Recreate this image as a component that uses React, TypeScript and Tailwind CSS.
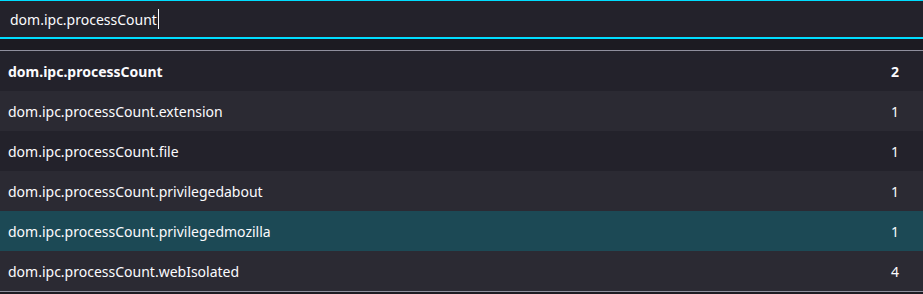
import React from 'react'

const rows = [
  { name: 'dom.ipc.processCount', value: '2', bold: true },
  { name: 'dom.ipc.processCount.extension', value: '1' },
  { name: 'dom.ipc.processCount.file', value: '1' },
  { name: 'dom.ipc.processCount.privilegedabout', value: '1' },
  { name: 'dom.ipc.processCount.privilegedmozilla', value: '1', selected: true },
  { name: 'dom.ipc.processCount.webIsolated', value: '4' },
]

const App = () => {
  return (
    <div
      className="h-[294px] w-[923px] bg-[#1c1b22] text-[#fbfbfe] text-[14px] overflow-hidden"
      style={{ fontFamily: '"Noto Sans", "Open Sans", sans-serif' }}
    >
      <div className="h-[39px] bg-[#23222b] border-t border-[#00ddff] border-b-2 flex items-center pl-[10px]">
        <span>dom.ipc.processCount</span>
        <span className="ml-[1px] inline-block w-px h-[20px] bg-[#fbfbfe]" />
      </div>

      <div className="mt-[11px] border-t border-b border-[#8f8f9d]">
        {rows.map((row, i) => (
          <div
            key={row.name}
            className={
              'h-10 flex items-center justify-between pl-2 pr-[24px] ' +
              (row.selected
                ? 'bg-[#1c4955]'
                : i % 2 === 0
                  ? 'bg-[#23222b]'
                  : 'bg-[#2b2a33]') +
              (row.bold ? ' font-bold' : '')
            }
          >
            <span>{row.name}</span>
            <span>{row.value}</span>
          </div>
        ))}
      </div>
    </div>
  )
}

export default App
